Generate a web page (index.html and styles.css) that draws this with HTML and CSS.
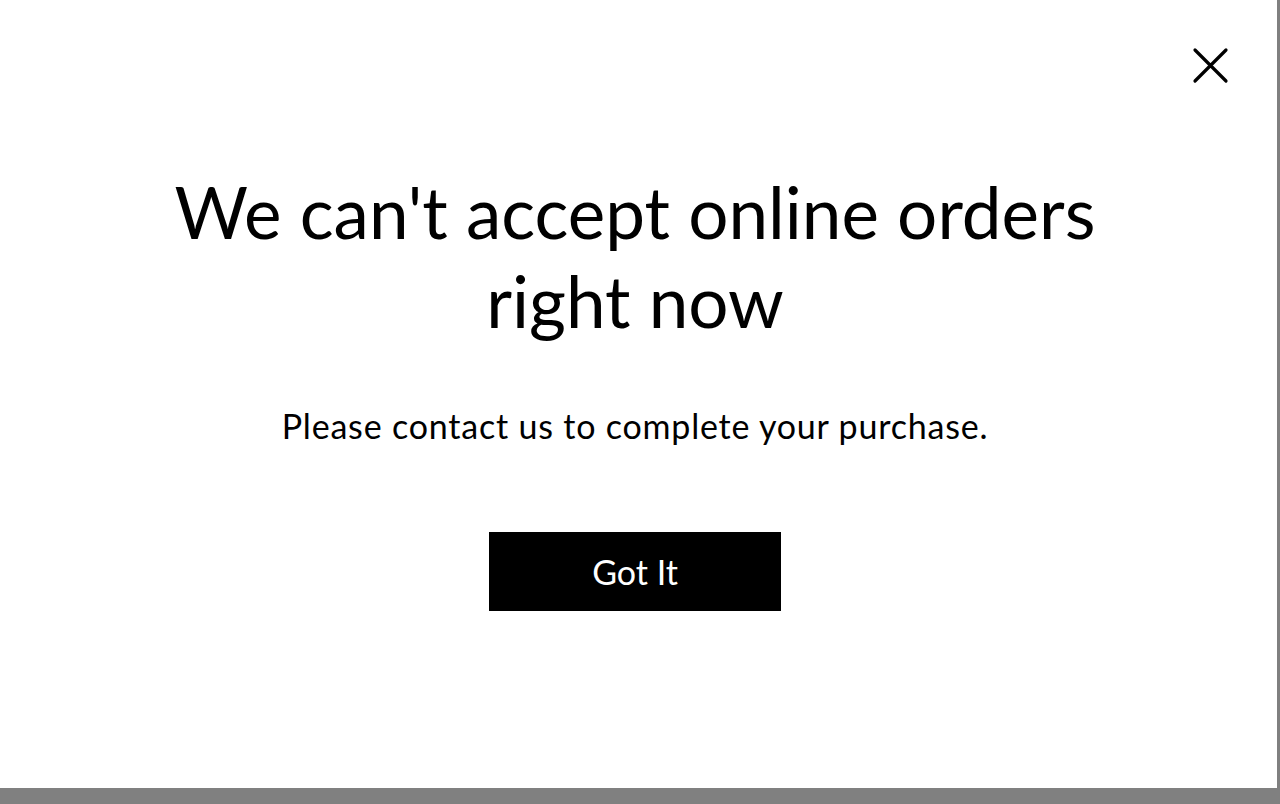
FILE: index.html
```html
<!DOCTYPE html>
<html lang="en">
<head>
    <meta charset="UTF-8">
    <meta name="viewport" content="width=device-width, initial-scale=1.0">
    <title>Online orders unavailable</title>
    <link rel="stylesheet" href="styles.css">
</head>
<body>
    <div class="modal">
        <button class="close-btn" aria-label="Close">
            <svg width="40" height="40" viewBox="0 0 40 40">
                <path d="M5 5 L36 36 M36 5 L5 36" stroke="#000" stroke-width="3.2" stroke-linecap="round" fill="none"/>
            </svg>
        </button>
        <div class="modal-body">
            <h1 class="modal-title">We can't accept online orders right now</h1>
            <p class="modal-text">Please contact us to complete your purchase.</p>
            <button class="got-it">Got It</button>
        </div>
    </div>
</body>
</html>
```

FILE: styles.css
```css
* {
    margin: 0;
    padding: 0;
    box-sizing: border-box;
}

html, body {
    height: 100%;
}

body {
    font-family: Lato, 'Liberation Sans', sans-serif;
    background-color: #808080;
    color: #000;
    overflow: hidden;
}

.modal {
    position: relative;
    width: 1277px;
    height: 788px;
    background-color: #fff;
}

.close-btn {
    position: absolute;
    top: 45px;
    right: 47px;
    background: none;
    border: none;
    cursor: pointer;
}

.modal-body {
    display: flex;
    flex-direction: column;
    align-items: center;
    text-align: center;
    padding-top: 167px;
    padding-right: 7px;
}

.modal-title {
    font-size: 71px;
    font-weight: 400;
    line-height: 89px;
    max-width: 960px;
    margin-bottom: 61px;
}

.modal-text {
    font-size: 34px;
    line-height: 40px;
    letter-spacing: 0.8px;
    margin-bottom: 86px;
}

.got-it {
    width: 292px;
    height: 79px;
    background-color: #000;
    color: #fff;
    border: none;
    font-family: inherit;
    font-size: 34px;
    cursor: pointer;
}
```
